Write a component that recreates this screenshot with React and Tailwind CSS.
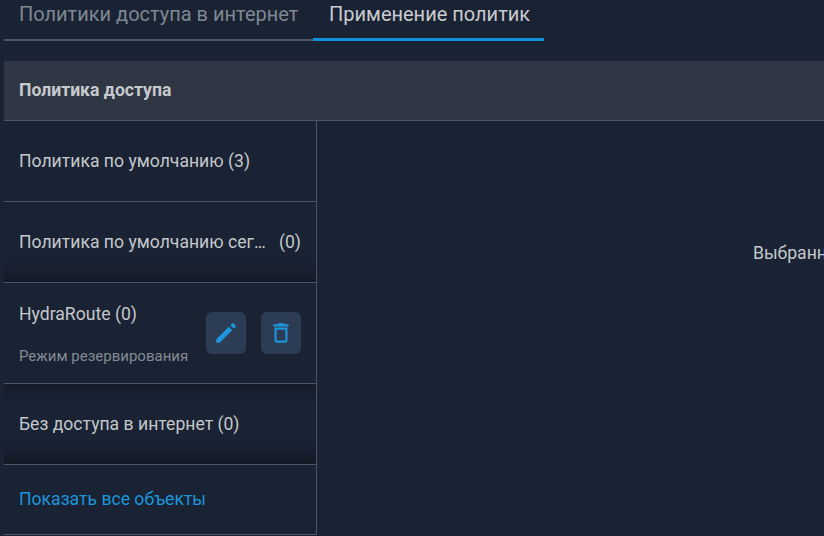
const font = { fontFamily: 'Roboto, sans-serif' };

function Row({ children, className = '' }) {
    return (
        <div className={`flex items-center pl-[15px] pr-[15px] border-b border-[#4b5566] ${className}`}>
            {children}
        </div>
    );
}

function IconButton({ children }) {
    return (
        <button className="w-10 h-[42px] flex items-center justify-center rounded-md bg-[#2c3c55]">
            <svg className="w-[26px] h-[26px] text-[#1c95dc]" viewBox="0 0 24 24" fill="currentColor">{children}</svg>
        </button>
    );
}

export default function App() {
    return (
        <div className="w-[824px] h-[536px] overflow-hidden bg-[#1a2333] pl-1" style={font}>
            {/* tabs */}
            <div className="flex h-[41px]">
                <div className="w-[309px] pl-[15px] pt-[1px] text-[20px] leading-[26px] text-[#7f8792] border-b-2 border-[#4d5563] h-[41px]">
                    Политики доступа в интернет
                </div>
                <div className="w-[231px] pl-[16px] pt-[1px] text-[20px] leading-[26px] text-[#c9ccd0] border-b-[3px] border-[#1390d6] h-[41px]">
                    Применение политик
                </div>
            </div>

            {/* header */}
            <div className="mt-5 h-[60px] flex items-center pl-[15px] bg-[#2f3744] border-b border-[#4b5566] text-[17.6px] font-bold text-[#c6c9cd]">
                Политика доступа
            </div>

            <div className="flex">
                <div className="w-[313px] border-r border-[#4b5566] text-[17.6px] text-[#c4c7cb]">
                    <Row className="h-[81px]">Политика по умолчанию (3)</Row>
                    <Row className="h-[81px] justify-between shadow-[inset_0_-22px_16px_-16px_rgba(10,14,20,0.55)]">
                        <span>Политика по умолчанию сег…</span>
                        <span>(0)</span>
                    </Row>
                    <div className="h-[101px] flex items-center justify-between pl-[15px] pr-[15px] border-b border-[#4b5566]">
                        <div className="flex flex-col gap-[21px] mt-[1px]">
                            <span className="leading-[24px]">HydraRoute (0)</span>
                            <span className="text-[15px] leading-[18px] text-[#848b95]">Режим резервирования</span>
                        </div>
                        <div className="flex gap-[15px]">
                            <IconButton>
                                <path d="M3 21v-3.2L14.6 6.2l3.2 3.2L6.2 21H3zM16 4.8l1.6-1.6c.4-.4 1-.4 1.4 0l1.8 1.8c.4.4.4 1 0 1.4L19.2 8 16 4.8z" />
                            </IconButton>
                            <IconButton>
                                <path d="M6 19c0 1.1.9 2 2 2h8c1.1 0 2-.9 2-2V7H6v12zM8 9h8v10H8V9zm7.5-5l-1-1h-5l-1 1H5v2h14V4h-3.5z" />
                            </IconButton>
                        </div>
                    </div>
                    <Row className="h-[81px] shadow-[inset_0_-22px_16px_-16px_rgba(10,14,20,0.55),inset_0_14px_12px_-12px_rgba(10,14,20,0.5)]">Без доступа в интернет (0)</Row>
                    <div className="h-[70px] flex items-center pl-[15px] border-b border-[#4b5566] text-[#1c95dc]">
                        Показать все объекты
                    </div>
                </div>
                <div className="flex-1 pl-[436px] pt-[119px] text-[17.6px] text-[#c4c7cb] whitespace-nowrap overflow-hidden">
                    Выбранн
                </div>
            </div>
        </div>
    );
}
